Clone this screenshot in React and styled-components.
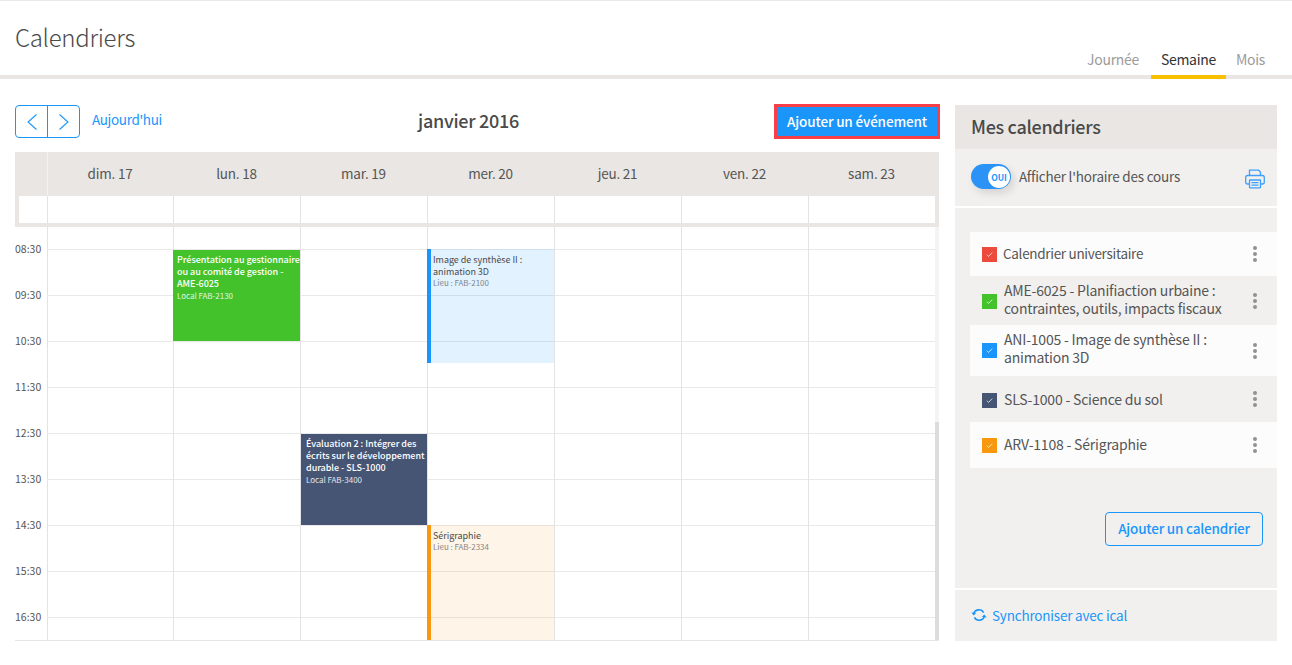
import React from "react";
import styled, { createGlobalStyle } from "styled-components";

const FONT = `"Noto Sans CJK SC", "Noto Sans", sans-serif`;

const Global = createGlobalStyle`
  html, body { margin: 0; padding: 0; background: #fff; }
  body { font-family: ${FONT}; color: #4a4a4a; }
  * { box-sizing: border-box; }
`;

const Page = styled.div`
  width: 1292px;
  height: 665px;
  overflow: hidden;
  background: #fff;
`;

const Header = styled.header`
  height: 79px;
  border-top: 1px solid #e9e9e9;
  border-bottom: 4px solid #e9e6e3;
  padding: 0 15px;
  display: flex;
  justify-content: space-between;
`;

const PageTitle = styled.h1`
  margin: 20px 0 0;
  font-size: 24px;
  line-height: 32px;
  letter-spacing: -0.3px;
  font-weight: 300;
  color: #4a4a4a;
`;

const Tabs = styled.nav`
  display: flex;
  align-self: flex-end;
  margin-bottom: -4px;
  margin-right: 2px;
`;

const Tab = styled.div`
  padding: 0 10px;
  height: 29px;
  margin-right: ${(p) => (p.$first ? 2 : 0)}px;
  font-size: 14px;
  line-height: 19px;
  letter-spacing: -0.3px;
  color: ${(p) => (p.$active ? "#333" : "#9b9b9b")};
  border-bottom: 4px solid ${(p) => (p.$active ? "#f9c000" : "transparent")};
`;

const Body = styled.div`
  display: flex;
  padding: 25px 15px 0;
  gap: 15px;
`;

const Main = styled.main`
  width: 925px;
`;

const Toolbar = styled.div`
  height: 48px;
  position: relative;
  display: flex;
  align-items: flex-start;
`;

const NavGroup = styled.div`
  display: flex;
  width: 65px;
  height: 33px;
  margin-top: 1px;
  border: 1px solid #1a96fb;
  border-radius: 4px;
`;

const NavButton = styled.button`
  flex: 1;
  padding: 0;
  background: none;
  border: 0;
  display: flex;
  align-items: center;
  justify-content: center;
  color: #1a96fb;
  & + & { border-left: 1px solid #1a96fb; }
`;

const Today = styled.a`
  margin: 5px 0 0 12px;
  font-size: 13.5px;
  line-height: 20px;
  letter-spacing: -0.35px;
  color: #1a96fb;
`;

const MonthTitle = styled.div`
  position: absolute;
  left: 0;
  right: 18px;
  top: 3px;
  text-align: center;
  font-size: 18px;
  line-height: 26px;
  letter-spacing: -0.3px;
  font-weight: 500;
  color: #4a4a4a;
`;

const AddEvent = styled.button`
  margin-left: auto;
  width: 166px;
  height: 35px;
  background: #1a96fb;
  border: 3px solid #f83f45;
  color: #fff;
  font-family: ${FONT};
  font-size: 13.5px;
  letter-spacing: -0.15px;
  font-weight: 500;
  padding: 0 0 2px;
`;

const Calendar = styled.div`
  width: 924px;
  height: 489px;
  border-bottom: 1px solid #e6e6e6;
  display: flex;
  flex-direction: column;
`;

const HeadRow = styled.div`
  height: 44px;
  flex: none;
  background: #e9e6e3;
  display: grid;
  grid-template-columns: 32px 126px repeat(6, 127px) 4px;
`;

const HeadCell = styled.div`
  text-align: center;
  font-size: 13.5px;
  letter-spacing: -0.2px;
  line-height: 43px;
  color: #555;
  box-shadow: ${(p) => (p.$first ? "inset 1px 0 0 #f4f2f0" : "none")};
`;

const AllDay = styled.div`
  height: 31px;
  flex: none;
  border: 4px solid #e9e6e3;
  border-top: 0;
  display: grid;
  grid-template-columns: 28px 126px repeat(6, 127px);
`;

const AllDayCell = styled.div`
  border-left: ${(p) => (p.$gutter ? "0" : "1px solid #e3e3e3")};
`;

const Scroller = styled.div`
  flex: 1;
  min-height: 0;
  position: relative;
  overflow: hidden;
  display: grid;
  grid-template-columns: 32px 126px repeat(6, 127px) 4px;
`;

const Gutter = styled.div`
  height: 100%;
  display: flex;
  flex-direction: column;
  padding-top: 15px;
  font-size: 10.5px;
  color: #555;
`;

const TimeLabel = styled.div`
  height: 46px;
  line-height: 14px;
  flex: none;
`;

const DayColumn = styled.div`
  position: relative;
  height: 100%;
  border-left: 1px solid #e3e3e3;
  background-image: linear-gradient(to bottom, #e9e9e9 1px, transparent 1px);
  background-size: 100% 46px;
  background-position: 0 22px;
`;

const ScrollTrack = styled.div`
  position: relative;
  background: #f4f4f4;
  height: 100%;
`;

const ScrollThumb = styled.div`
  position: absolute;
  left: 0;
  right: 0;
  top: 195px;
  bottom: 0;
  background: #dcdcdc;
`;

const Event = styled.div`
  position: absolute;
  left: ${(p) => p.$left}px;
  right: ${(p) => (p.$pale ? "-1px" : "0")};
  padding: ${(p) => p.$pad};
  background: ${(p) => p.$bg};
  border-left: ${(p) => (p.$bar ? `4px solid ${p.$bar}` : "0")};
  color: ${(p) => (p.$pale ? "#4a4a4a" : "#fff")};
  font-size: 9px;
  line-height: 12px;
  letter-spacing: -0.03px;
  white-space: nowrap;
  overflow: hidden;
`;

const EventTitle = styled.div`
  font-weight: ${(p) => (p.$pale ? 400 : 500)};
`;

const EventPlace = styled.div`
  font-size: 8px;
  line-height: 11px;
  margin-top: ${(p) => (p.$pale ? "-1px" : "0")};
  opacity: ${(p) => (p.$pale ? 0.65 : 0.85)};
`;

const Side = styled.aside`
  width: 322px;
  height: 536px;
  margin-top: 1px;
  display: flex;
  flex-direction: column;
  gap: 2px;
  background: #fff;
`;

const SideHead = styled.div`
  height: 44px;
  margin-bottom: -2px;
  flex: none;
  background: #e9e6e3;
  padding-left: 16px;
  font-size: 18px;
  line-height: 42px;
  letter-spacing: -0.3px;
  font-weight: 500;
  color: #4a4a4a;
`;

const ToggleRow = styled.div`
  height: 57px;
  flex: none;
  background: #f1f0ee;
  display: flex;
  align-items: center;
  padding: 0 12px 2px 16px;
`;

const Toggle = styled.div`
  width: 40px;
  height: 25px;
  border-radius: 13px;
  background: #2b93f5;
  display: flex;
  align-items: center;
  justify-content: flex-end;
  padding-right: 1px;
  box-shadow: 3px 4px 8px rgba(0, 0, 0, 0.12);
`;

const Knob = styled.div`
  width: 22px;
  height: 22px;
  border-radius: 50%;
  background: #fff;
  color: #1a96fb;
  font-size: 8.5px;
  font-weight: 700;
  line-height: 22px;
  text-align: center;
`;

const ToggleLabel = styled.span`
  margin: 0 0 2px 8px;
  font-size: 13.5px;
  letter-spacing: -0.2px;
  color: #555;
`;

const PrintIcon = styled.svg`
  margin-left: auto;
  margin-top: 4px;
  color: #3f9ffb;
`;

const CalendarsPanel = styled.div`
  height: 380px;
  flex: none;
  background: #f1f0ee;
  padding: 24px 0 0 15px;
  display: flex;
  flex-direction: column;
`;

const CalRow = styled.div`
  height: ${(p) => p.$h}px;
  flex: none;
  background: ${(p) => (p.$light ? "#fcfcfc" : "#f1f0ee")};
  display: flex;
  align-items: center;
  padding: 0 19px 0 12px;
`;

const Check = styled.div`
  width: 15px;
  height: 15px;
  flex: none;
  margin-top: ${(p) => p.$drop}px;
  background: ${(p) => p.$color};
  display: flex;
  align-items: center;
  justify-content: center;
`;

const CalName = styled.div`
  flex: 1;
  margin: 0 0 ${(p) => p.$lift}px ${(p) => (p.$tight ? 6 : 7)}px;
  font-size: ${(p) => (p.$tight ? 13.5 : 14)}px;
  line-height: 18px;
  letter-spacing: ${(p) => (p.$tight ? -0.3 : -0.2)}px;
  color: #555;
`;

const Dots = styled.div`
  width: 5px;
  display: flex;
  flex-direction: column;
  gap: 2px;
`;

const Dot = styled.span`
  width: 4px;
  height: 4px;
  border-radius: 50%;
  background: #929292;
`;

const AddCalendar = styled.button`
  align-self: flex-end;
  margin: 44px 14px 0 0;
  width: 158px;
  height: 34px;
  background: none;
  border: 1px solid #1a96fb;
  border-radius: 4px;
  color: #1a96fb;
  font-family: ${FONT};
  font-size: 13.5px;
  letter-spacing: -0.2px;
  font-weight: 500;
  padding: 0 0 2px;
`;

const SyncRow = styled.div`
  flex: 1;
  background: #f1f0ee;
  display: flex;
  align-items: center;
  gap: 5px;
  padding: 0 0 2px 16px;
  color: #1a96fb;
  font-size: 13.5px;
  letter-spacing: -0.2px;
`;

const SyncIcon = styled.svg`
  margin-top: 1px;
`;

const days = ["dim. 17", "lun. 18", "mar. 19", "mer. 20", "jeu. 21", "ven. 22", "sam. 23"];
const times = ["08:30", "09:30", "10:30", "11:30", "12:30", "13:30", "14:30", "15:30", "16:30"];

const events = {
  1: [{ top: 23, height: 91, left: -1, pad: "4px 0 0 4px", bg: "#43c22c", title: ["Présentation au gestionnaire", "ou au comité de gestion -", "AME-6025"], place: "Local FAB-2130" }],
  2: [{ top: 207, height: 91, left: 0, pad: "4px 0 0 5px", bg: "#475575", title: ["Évaluation 2 : Intégrer des", "écrits sur le développement", "durable - SLS-1000"], place: "Local FAB-3400" }],
  3: [
    { top: 22, height: 114, left: -1, pad: "5px 0 0 2px", bg: "rgba(26, 150, 251, 0.12)", bar: "#1a96fb", pale: true, title: ["Image de synthèse II :", "animation 3D"], place: "Lieu : FAB-2100" },
    { top: 298, height: 115, left: -1, pad: "5px 0 0 2px", bg: "rgba(247, 152, 15, 0.1)", bar: "#f7980f", pale: true, title: ["Sérigraphie"], place: "Lieu : FAB-2334" },
  ],
};

const calendars = [
  { color: "#ec4a3d", h: 44, light: true, tight: true, lift: 2, drop: 0, lines: ["Calendrier universitaire"] },
  { color: "#43c22c", h: 49, lift: 4, drop: 2, lines: ["AME-6025 - Planifiaction urbaine :", "contraintes, outils, impacts fiscaux"] },
  { color: "#1a96fb", h: 51, light: true, lift: 5, drop: 0, lines: ["ANI-1005 - Image de synthèse II :", "animation 3D"] },
  { color: "#475575", h: 46, lift: 0, drop: 2, lines: ["SLS-1000 - Science du sol"] },
  { color: "#f7980f", h: 46, light: true, lift: 2, drop: 0, lines: ["ARV-1108 - Sérigraphie"] },
];

const CheckMark = () => (
  <svg width="9" height="9" viewBox="0 0 9 9" fill="none" stroke="#fff" strokeOpacity="0.8" strokeWidth="0.9">
    <path d="M1.8 4.7 L3.6 6.4 L7.2 2.6" />
  </svg>
);

export default function App() {
  return (
    <Page>
      <Global />
      <Header>
        <PageTitle>Calendriers</PageTitle>
        <Tabs>
          <Tab $first>Journée</Tab>
          <Tab $active>Semaine</Tab>
          <Tab>Mois</Tab>
        </Tabs>
      </Header>
      <Body>
        <Main>
          <Toolbar>
            <NavGroup>
              <NavButton aria-label="Précédent">
                <svg width="12" height="18" viewBox="0 0 12 18" fill="none" stroke="currentColor" strokeWidth="1.1"><path d="M10.5 1.5 L2 9 L10.5 16.5" /></svg>
              </NavButton>
              <NavButton aria-label="Suivant">
                <svg width="12" height="18" viewBox="0 0 12 18" fill="none" stroke="currentColor" strokeWidth="1.1"><path d="M1.5 1.5 L10 9 L1.5 16.5" /></svg>
              </NavButton>
            </NavGroup>
            <Today>Aujourd'hui</Today>
            <MonthTitle>janvier 2016</MonthTitle>
            <AddEvent>Ajouter un événement</AddEvent>
          </Toolbar>
          <Calendar>
            <HeadRow>
              <div />
              {days.map((d, i) => (
                <HeadCell key={d} $first={i === 0}>{d}</HeadCell>
              ))}
            </HeadRow>
            <AllDay>
              <AllDayCell $gutter />
              {days.map((d) => (
                <AllDayCell key={d} />
              ))}
            </AllDay>
            <Scroller>
              <Gutter>
                {times.map((t) => (
                  <TimeLabel key={t}>{t}</TimeLabel>
                ))}
              </Gutter>
              {days.map((d, i) => (
                <DayColumn key={d}>
                  {(events[i] || []).map((e) => (
                    <Event key={e.place} style={{ top: e.top, height: e.height }} $left={e.left} $pad={e.pad} $bg={e.bg} $bar={e.bar} $pale={e.pale}>
                      <EventTitle $pale={e.pale}>
                        {e.title.map((l) => (
                          <div key={l}>{l}</div>
                        ))}
                      </EventTitle>
                      <EventPlace $pale={e.pale}>{e.place}</EventPlace>
                    </Event>
                  ))}
                </DayColumn>
              ))}
              <ScrollTrack>
                <ScrollThumb />
              </ScrollTrack>
            </Scroller>
          </Calendar>
        </Main>
        <Side>
          <SideHead>Mes calendriers</SideHead>
          <ToggleRow>
            <Toggle><Knob>OUI</Knob></Toggle>
            <ToggleLabel>Afficher l'horaire des cours</ToggleLabel>
            <PrintIcon width="20" height="20" viewBox="0 0 20 20" fill="none" stroke="currentColor" strokeWidth="1.3">
              <path d="M4.5 6.5 V1.2 H13.5 L15.5 3.2 V6.5" />
              <path d="M4 15 H2.5 Q0.7 15 0.7 13 V8.5 Q0.7 6.5 2.5 6.5 H17.5 Q19.3 6.5 19.3 8.5 V13 Q19.3 15 17.5 15 H16" />
              <rect x="4.5" y="11" width="11" height="7.8" rx="0.5" />
              <path d="M6.5 13.6 H13.5 M6.5 16.2 H13.5" />
            </PrintIcon>
          </ToggleRow>
          <CalendarsPanel>
            {calendars.map((c) => (
              <CalRow key={c.lines[0]} $h={c.h} $light={c.light}>
                <Check $color={c.color} $drop={c.drop}><CheckMark /></Check>
                <CalName $lift={c.lift} $tight={c.tight}>
                  {c.lines.map((l) => (
                    <div key={l}>{l}</div>
                  ))}
                </CalName>
                <Dots><Dot /><Dot /><Dot /></Dots>
              </CalRow>
            ))}
            <AddCalendar>Ajouter un calendrier</AddCalendar>
          </CalendarsPanel>
          <SyncRow>
            <SyncIcon width="16" height="14" viewBox="0 0 16 14" fill="none" stroke="currentColor" strokeWidth="1.6">
              <path d="M2.6 6 A5.4 5.4 0 0 1 12.6 4.6" />
              <path d="M13.4 8 A5.4 5.4 0 0 1 3.4 9.4" />
              <path d="M0.3 4.6 L2.7 7.4 L5.2 4.9 Z" fill="currentColor" stroke="none" />
              <path d="M15.7 9.4 L13.3 6.6 L10.8 9.1 Z" fill="currentColor" stroke="none" />
            </SyncIcon>
            Synchroniser avec ical
          </SyncRow>
        </Side>
      </Body>
    </Page>
  );
}
